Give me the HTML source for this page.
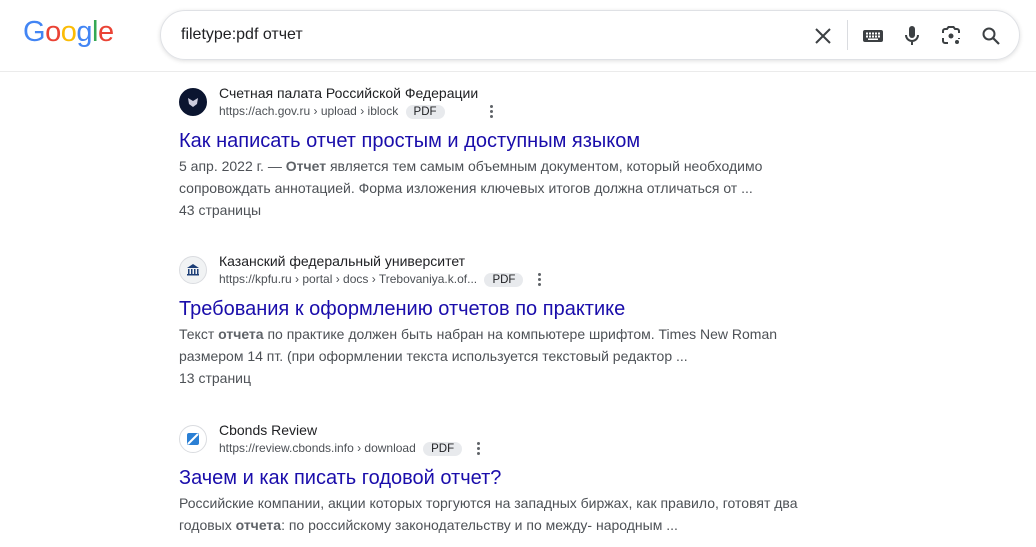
<!DOCTYPE html>
<html><head><meta charset="utf-8"><style>
*{margin:0;padding:0;box-sizing:border-box}
body{width:1036px;height:547px;overflow:hidden;background:#fff;font-family:"Liberation Sans",Arial,sans-serif;position:relative}
.hdr{position:absolute;left:0;top:0;width:1036px;height:72px;border-bottom:1px solid #ebebeb}
.logo{position:absolute;left:23px;top:16px;font-size:29px;letter-spacing:-0.5px;font-weight:normal}
.box{position:absolute;left:160px;top:10px;width:860px;height:50px;border:1px solid #dfe1e5;border-radius:25px;box-shadow:0 1px 4px rgba(32,33,36,.15)}
.q{position:absolute;left:20px;top:15px;font-size:16px;color:#202124}
.sep{position:absolute;left:686px;top:9px;width:1px;height:30px;background:#dadce0}
.ic{position:absolute;top:13px}
.r{position:absolute;left:179px}
.fav{position:absolute;left:0;top:-5px;width:28px;height:28px;border-radius:50%;background:#f1f3f4;border:1px solid #dadce0}
.site{position:absolute;left:40px;top:-8px;font-size:14px;color:#202124;white-space:nowrap}
.url{position:absolute;left:40px;top:11px;font-size:12px;color:#4d5156;white-space:nowrap}
.pdf{display:inline-block;background:#e8eaed;border-radius:8px;padding:1px 8px;font-size:11.5px;color:#202124;margin-left:4px}
.dots{position:absolute;top:12px;width:3px}
.dots i{display:block;width:3px;height:3px;background:#5f6368;border-radius:50%;margin-bottom:2px}
.t{position:absolute;left:0;top:37px;font-size:20px;color:#1a0dab;white-space:nowrap}
.s{position:absolute;left:0;top:62px;font-size:14px;line-height:22px;color:#4d5156;white-space:nowrap}
.s b{color:#5f6368}
</style></head><body>
<div class="hdr">
<div class="logo"><span style="color:#4285f4">G</span><span style="color:#ea4335">o</span><span style="color:#fbbc05">o</span><span style="color:#4285f4">g</span><span style="color:#34a853">l</span><span style="color:#ea4335">e</span></div>
<div class="box"><div class="q">filetype:pdf отчет</div>
<svg class="ic" style="left:650px" width="24" height="24" viewBox="0 0 24 24"><path d="M5 5L19 19M19 5L5 19" stroke="#3c4043" stroke-width="2"/></svg>
<div class="sep"></div>
<svg class="ic" style="left:700px" width="24" height="24" viewBox="0 0 24 24"><rect x="2" y="6" width="20" height="12" rx="2" fill="#3c4043"/><g fill="#fff"><rect x="5" y="8.5" width="2" height="2"/><rect x="8" y="8.5" width="2" height="2"/><rect x="11" y="8.5" width="2" height="2"/><rect x="14" y="8.5" width="2" height="2"/><rect x="17" y="8.5" width="2" height="2"/><rect x="5" y="11.5" width="2" height="2"/><rect x="8" y="11.5" width="2" height="2"/><rect x="11" y="11.5" width="2" height="2"/><rect x="14" y="11.5" width="2" height="2"/><rect x="17" y="11.5" width="2" height="2"/><rect x="7" y="14.5" width="10" height="1.5"/></g></svg>
<svg class="ic" style="left:739px" width="24" height="24" viewBox="0 0 24 24"><rect x="9" y="2" width="6" height="12" rx="3" fill="#3c4043"/><path d="M6 11a6 6 0 0 0 12 0M12 17v4" stroke="#3c4043" stroke-width="2" fill="none"/></svg>
<svg class="ic" style="left:778px" width="24" height="24" viewBox="0 0 24 24"><path d="M4 9V7a2 2 0 0 1 2-2h2l1.5-2h5L16 5h2a2 2 0 0 1 2 2v2M4 14v3a2 2 0 0 0 2 2h3M20 14v1" stroke="#3c4043" stroke-width="2" fill="none"/><circle cx="12" cy="12" r="2.5" fill="#3c4043"/><circle cx="18" cy="18" r="2" fill="#3c4043"/></svg>
<svg class="ic" style="left:818px" width="24" height="24" viewBox="0 0 24 24"><circle cx="10" cy="10" r="5.5" stroke="#3c4043" stroke-width="2" fill="none"/><path d="M14 14l6 6" stroke="#3c4043" stroke-width="2.2"/></svg>
</div></div>

<div class="r" style="top:93px">
<div class="fav" style="background:#0b1530;border-color:#0b1530"><svg width="26" height="26" viewBox="0 0 26 26"><path d="M8 9l5 3 5-3-1 6-4 3-4-3z" fill="#ccd"/></svg></div>
<div class="site">Счетная палата Российской Федерации</div>
<div class="url">https://ach.gov.ru › upload › iblock <span class="pdf">PDF</span></div>
<div class="dots" style="left:311px"><i></i><i></i><i></i></div>
<div class="t">Как написать отчет простым и доступным языком</div>
<div class="s">5 апр. 2022 г. — <b>Отчет</b> является тем самым объемным документом, который необходимо<br>сопровождать аннотацией. Форма изложения ключевых итогов должна отличаться от ...<br>43 страницы</div>
</div>

<div class="r" style="top:261px">
<div class="fav"><svg width="26" height="26" viewBox="0 0 26 26"><path d="M7 11h12l-6-4zM8 12h1.5v5H8zM11 12h1.5v5H11zM14 12h1.5v5H14zM17 12h1.5v5H17zM7 17h12v1.5H7z" fill="#1d3f77"/></svg></div>
<div class="site">Казанский федеральный университет</div>
<div class="url">https://kpfu.ru › portal › docs › Trebovaniya.k.of... <span class="pdf">PDF</span></div>
<div class="dots" style="left:359px"><i></i><i></i><i></i></div>
<div class="t">Требования к оформлению отчетов по практике</div>
<div class="s">Текст <b>отчета</b> по практике должен быть набран на компьютере шрифтом. Times New Roman<br>размером 14 пт. (при оформлении текста используется текстовый редактор ...<br>13 страниц</div>
</div>

<div class="r" style="top:430px">
<div class="fav" style="background:#fff"><svg width="26" height="26" viewBox="0 0 26 26"><rect x="7" y="7" width="12" height="12" rx="2" fill="#2a7fd4"/><path d="M8 18L18 8" stroke="#fff" stroke-width="2"/></svg></div>
<div class="site">Cbonds Review</div>
<div class="url">https://review.cbonds.info › download <span class="pdf">PDF</span></div>
<div class="dots" style="left:298px"><i></i><i></i><i></i></div>
<div class="t">Зачем и как писать годовой отчет?</div>
<div class="s">Российские компании, акции которых торгуются на западных биржах, как правило, готовят два<br>годовых <b>отчета</b>: по российскому законодательству и по между- народным ...</div>
</div>
</body></html>
